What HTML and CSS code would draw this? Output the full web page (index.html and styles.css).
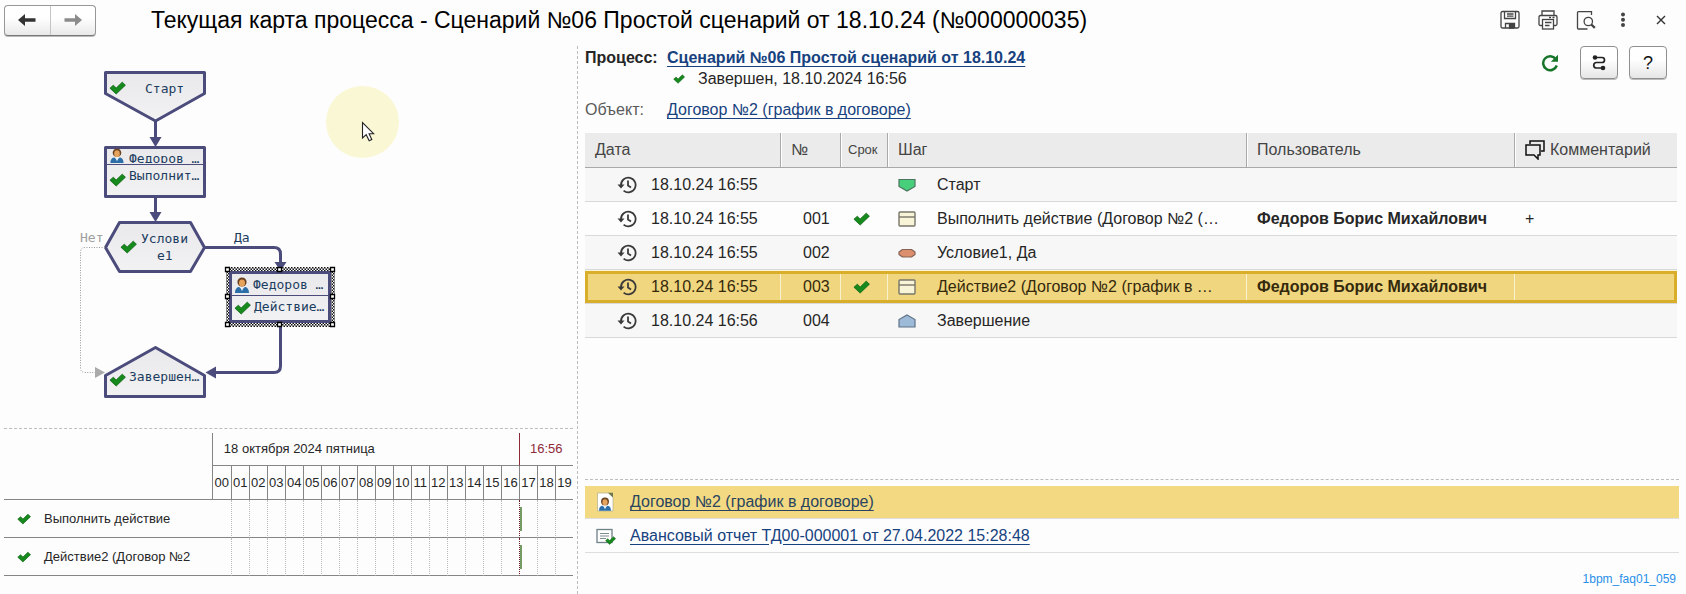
FILE: index.html
```html
<!DOCTYPE html>
<html lang="ru">
<head>
<meta charset="utf-8">
<title>Текущая карта процесса</title>
<link rel="stylesheet" href="styles.css">
</head>
<body>
<svg class="defs" aria-hidden="true">
  <defs>
    <symbol id="check" viewBox="0 0 18 14"><path d="M1 7.2 4.6 4l3 3L14 .8 17.4 4 7.6 13.4Z" fill="#168a1c" stroke="#0c5f14" stroke-width=".8" stroke-linejoin="round"/></symbol>
    <symbol id="person" viewBox="0 0 14 16"><path d="M0 16c0-5 3-6 4-6l3 2 3-2c1 0 4 1 4 6Z" fill="#2c6ea8"/><path d="m5 10 2 4 2-4Z" fill="#e8f2fa"/><circle cx="7" cy="5" r="4.6" fill="#6b4220"/><ellipse cx="7" cy="6" rx="3" ry="3.6" fill="#e5a35c"/></symbol>
    <symbol id="history" viewBox="0 0 20 18"><g fill="none" stroke="#3a3a3a" stroke-width="1.8"><path d="M4 9a7.3 7.3 0 1 1 2.6 5.6M11 4.500v5l3 2"/></g><path d="M.5 8.500h7L4 12.500Z" fill="#3a3a3a"/></symbol>
    <symbol id="action" viewBox="0 0 18 16"><rect x="1" y="1" width="16" height="14" rx="1" fill="#f8f4d8" stroke="#77756a" stroke-width="1.400"/><path d="M1 6h16" stroke="#77756a" stroke-width="1.400"/></symbol>
    <pattern id="hatch" width="3" height="3" patternUnits="userSpaceOnUse"><rect width="3" height="3" fill="#fff"/><path d="M0 0h1.500v1.500H0ZM1.500 1.500H3V3H1.500Z" fill="#111"/></pattern>
    <linearGradient id="fill" x1="0" x2="0" y1="0" y2="1"><stop offset="0" stop-color="#e9e9ec"/><stop offset="1" stop-color="#f2f2f3"/></linearGradient>
    <clipPath id="cut"><rect x="107" y="148" width="96" height="15"/></clipPath>
  </defs>
</svg>

<header class="titlebar">
  <div class="nav">
    <button type="button" aria-label="Назад"><svg width="18" height="12" viewBox="0 0 18 12"><path d="M0 6 7 0v4.300h10.500v3.400H7V12Z" fill="#333"/></svg></button>
    <button type="button" aria-label="Вперед"><svg width="18" height="12" viewBox="0 0 18 12"><path d="M18 6 11 0v4.300H.5v3.400H11V12Z" fill="#8b8b8b"/></svg></button>
  </div>
  <h1>Текущая карта процесса - Сценарий №06 Простой сценарий от 18.10.24 (№000000035)</h1>
  <div class="tools">
    <button type="button" aria-label="Сохранить"><svg width="20" height="20" viewBox="0 0 20 20" fill="none" stroke="#444" stroke-width="1.300"><rect x="1" y="1.500" width="18" height="16.500" rx="1.500"/><path d="M4.500 2v6.500h11V2M7 4h6.500M7 6.200h6.500M5.500 18v-4.500h9V18"/><path d="M9.500 14.500h4V18h-4Z" fill="#444"/></svg></button>
    <button type="button" aria-label="Печать"><svg width="20" height="20" viewBox="0 0 20 20" fill="none" stroke="#444" stroke-width="1.300"><path d="M4 5.500v-4.500h12v4.500M4 15.500H2.500Q1 15.500 1 14V7q0-1.500 1.500-1.500h15Q19 5.500 19 7v7q0 1.500-1.500 1.500H16"/><rect x="4.500" y="9.500" width="11" height="9.500"/><path d="M7 12.500h6.500M7 15.500h4.500M11 7.500h2M14.500 7.500h2"/></svg></button>
    <button type="button" aria-label="Предварительный просмотр"><svg width="20" height="20" viewBox="0 0 20 20" fill="none" stroke="#444" stroke-width="1.300"><path d="M15.500 5V1.700H2.500q-1 0-1 1V18q0 1 1 1h9"/><circle cx="12.300" cy="11.500" r="4.200"/><path d="m15.300 14.500 3.500 3.300" stroke-width="2.400"/></svg></button>
    <button type="button" class="dots" aria-label="Ещё"><svg width="6" height="16" viewBox="0 0 6 16" fill="#444"><circle cx="3" cy="2.500" r="2"/><circle cx="3" cy="7.800" r="2"/><circle cx="3" cy="13" r="2"/></svg></button>
    <button type="button" class="close" aria-label="Закрыть"><svg width="10" height="10" viewBox="0 0 10 10"><path d="m1 1 8 8M9 1 1 9" stroke="#333" stroke-width="1.400"/></svg></button>
  </div>
</header>

<main class="split">
  <section class="left">
    <svg class="map" width="569" height="376" viewBox="4 46 569 376">
      <ellipse cx="362.500" cy="122" rx="36.500" ry="36" fill="#faf7d4"/>
      <path d="M362.500 122.500v15.500l3.700-3.300 3 6 2.600-1.200-2.700-5.800h4.500Z" fill="#fff" stroke="#222" stroke-width="1.100"/>

      <g fill="none" stroke="#4b4b7c" stroke-width="3">
        <path d="M155.500 121v18M155.500 198v16M205 247.500h69q6.500 0 6.500 6.500v10M280.500 326v40q0 6.500-6.500 6.500h-59"/>
        <g fill="url(#fill)" stroke-linejoin="round">
          <path d="M105.500 72.500h99v21l-49 27.500-50-27.500Z"/>
          <path d="M105.500 147.500h99v49h-99Z"/>
          <path d="M119.500 222.500h71l14 25-14 24h-71l-14-24Z"/>
          <path d="m155.500 347.500 49 28v21h-99v-21Z"/>
        </g>
      </g>
      <g fill="#4b4b7c">
        <path d="M149.500 137h12l-6 10ZM149.500 212h12l-6 10ZM274.500 262h12l-6 9ZM216 366.500v12l-10.500-6Z"/>
      </g>
      <path d="M105 247.500H85q-4.500 0-4.500 4.500v116q0 4.500 4.500 4.500h10" fill="none" stroke="#999" stroke-dasharray="1 1.500"/>
      <path d="M95 367v11l10-5.500Z" fill="#aaa"/>

      <path d="M226 267h109v60H226Z" fill="url(#hatch)"/>
      <path d="M230.500 272.500h99v49h-99Z" fill="url(#fill)" stroke="#4b4b7c" stroke-width="3"/>
      <path d="M107 164.500h96M232 295.500h96" stroke="#4b4b7c"/>
      <g fill="#fff" stroke="#000" stroke-width="1.300">
        <path d="M225.500 267.500h4v4h-4ZM277.500 267.500h4v4h-4ZM330.500 267.500h4v4h-4ZM225.500 294.500h4v4h-4ZM330.500 294.500h4v4h-4ZM225.500 322.500h4v4h-4ZM277.500 322.500h4v4h-4ZM330.500 322.500h4v4h-4Z"/>
      </g>

      <use href="#check" x="109" y="81" width="17" height="14"/>
      <use href="#check" x="109" y="173" width="17" height="14"/>
      <use href="#check" x="120" y="240" width="17" height="14"/>
      <use href="#check" x="234" y="301" width="17" height="14"/>
      <use href="#check" x="109" y="373" width="17" height="14"/>
      <use href="#person" x="110" y="148" width="14" height="15"/>
      <use href="#person" x="235" y="277" width="14" height="16"/>

      <g class="map-text">
        <text x="145" y="93">Старт</text>
        <text x="129" y="163" clip-path="url(#cut)">Федоров …</text>
        <text x="129" y="180">Выполнит…</text>
        <text x="141" y="243">Услови</text>
        <text x="157" y="260">е1</text>
        <text x="234" y="242">Да</text>
        <text x="80" y="242" class="muted">Нет</text>
        <text x="253" y="289">Федоров …</text>
        <text x="254" y="311">Действие…</text>
        <text x="129" y="381">Завершен…</text>
      </g>
    </svg>

    <div class="gantt-wrap">
      <table class="gantt">
        <colgroup><col><col class="h0"><col span="19" class="h"></colgroup>
        <thead>
          <tr><td rowspan="2" class="corner"></td><th colspan="17" class="day">18 октября 2024 пятница</th><th colspan="3" class="now">16:56</th></tr>
          <tr class="hours"><th>00</th><th>01</th><th>02</th><th>03</th><th>04</th><th>05</th><th>06</th><th>07</th><th>08</th><th>09</th><th>10</th><th>11</th><th>12</th><th>13</th><th>14</th><th>15</th><th>16</th><th>17</th><th>18</th><th>19</th></tr>
        </thead>
        <tbody>
          <tr><th class="task"><svg width="14" height="12"><use href="#check"/></svg>Выполнить действие</th><td class="first"></td><td></td><td></td><td></td><td></td><td></td><td></td><td></td><td></td><td></td><td></td><td></td><td></td><td></td><td></td><td></td><td></td><td class="mark"><span class="bar"></span></td><td></td><td></td></tr>
          <tr><th class="task"><svg width="14" height="12"><use href="#check"/></svg>Действие2 (Договор №2</th><td class="first"></td><td></td><td></td><td></td><td></td><td></td><td></td><td></td><td></td><td></td><td></td><td></td><td></td><td></td><td></td><td></td><td></td><td class="mark"><span class="bar"></span></td><td></td><td></td></tr>
        </tbody>
      </table>
    </div>
  </section>

  <section class="right">
    <div class="info">
      <dl>
        <dt class="strong">Процесс:</dt>
        <dd><a href="#" class="strong">Сценарий №06 Простой сценарий от 18.10.24</a>
          <span class="state"><svg width="12" height="10"><use href="#check"/></svg>Завершен, 18.10.2024 16:56</span></dd>
        <dt>Объект:</dt>
        <dd><a href="#">Договор №2 (график в договоре)</a></dd>
      </dl>
      <div class="actions">
        <button type="button" class="plain" aria-label="Обновить"><svg width="18" height="18" viewBox="0 0 18 18"><path d="M14.800 5A7 7 0 1 0 15.800 11.500" fill="none" stroke="#17752a" stroke-width="2.500"/><path d="M17 .8v7H9.800Z" fill="#17752a"/></svg></button>
        <button type="button" class="box" aria-label="Маршрут"><svg width="14" height="18" viewBox="0 0 14 18"><path d="M3 3.500h7a2.500 2.500 0 0 1 0 5h-6a2.800 2.800 0 0 0 0 5.500H11" fill="none" stroke="#222" stroke-width="1.700"/><circle cx="3" cy="3.500" r="2.300" fill="#222"/><circle cx="11" cy="14" r="2.300" fill="#222"/></svg></button>
        <button type="button" class="box">?</button>
      </div>
    </div>

    <table class="steps">
      <colgroup><col class="c-date"><col class="c-num"><col class="c-due"><col><col class="c-user"><col class="c-note"></colgroup>
      <thead><tr><th>Дата</th><th>№</th><th class="small">Срок</th><th>Шаг</th><th>Пользователь</th>
        <th><span class="note"><svg width="20" height="20" viewBox="0 0 20 20" fill="none" stroke="#111" stroke-width="1.500"><path d="M5 4V1h14v10h-3"/><path d="M1 5h14v10h-2v4L9 15H1Z"/></svg>Комментарий</span></th></tr></thead>
      <tbody>
        <tr><td><span class="date"><svg width="20" height="18"><use href="#history"/></svg>18.10.24 16:55</span></td><td class="num"></td><td></td><td><span class="step"><svg width="18" height="16" viewBox="0 0 18 16"><path d="M1 2.500h16v7L9 14 1 9.500Z" fill="#48cf7c" stroke="#4c7560" stroke-width="1.200"/></svg>Старт</span></td><td></td><td></td></tr>
        <tr><td><span class="date"><svg width="20" height="18"><use href="#history"/></svg>18.10.24 16:55</span></td><td class="num">001</td><td class="due"><svg width="17" height="14"><use href="#check"/></svg></td><td><span class="step"><svg width="18" height="16"><use href="#action"/></svg>Выполнить действие (Договор №2 (…</span></td><td class="user">Федоров Борис Михайлович</td><td class="plus">+</td></tr>
        <tr><td><span class="date"><svg width="20" height="18"><use href="#history"/></svg>18.10.24 16:55</span></td><td class="num">002</td><td></td><td><span class="step"><svg width="18" height="16" viewBox="0 0 18 16"><path d="M4.500 4.500h9L17 7v2.500L13.500 12h-9L1 9.500V7Z" fill="#dc8f6c" stroke="#866255" stroke-width="1.200" stroke-linejoin="round"/></svg>Условие1, Да</span></td><td></td><td></td></tr>
        <tr class="selected"><td><span class="date"><svg width="20" height="18"><use href="#history"/></svg>18.10.24 16:55</span></td><td class="num">003</td><td class="due"><svg width="17" height="14"><use href="#check"/></svg></td><td><span class="step"><svg width="18" height="16"><use href="#action"/></svg>Действие2 (Договор №2 (график в …</span></td><td class="user">Федоров Борис Михайлович</td><td></td></tr>
        <tr><td><span class="date"><svg width="20" height="18"><use href="#history"/></svg>18.10.24 16:56</span></td><td class="num">004</td><td></td><td><span class="step"><svg width="18" height="16" viewBox="0 0 18 16"><path d="m9 2 8 4.500V14H1V6.500Z" fill="#9dbbd9" stroke="#5f7286" stroke-width="1.200"/></svg>Завершение</span></td><td></td><td></td></tr>
      </tbody>
    </table>

    <ul class="docs">
      <li class="active"><svg width="18" height="20" viewBox="0 0 18 20"><path d="M1.500 1h11L17 5v14H1.500Z" fill="#fff" stroke="#b9b490" stroke-width=".8"/><path d="M12 .8h5v4.700Z" fill="#6b7550"/><use href="#person" x="3" y="5" width="12" height="14"/></svg><a href="#">Договор №2 (график в договоре)</a></li>
      <li><svg width="20" height="20" viewBox="0 0 20 20"><rect x="1" y="3.500" width="15" height="13" fill="#fff" stroke="#6f8088" stroke-width="1.300"/><path d="M4 7.500h9M4 10h9M4 12.500h6" stroke="#7d8b92"/><use href="#check" x="9" y="10" width="11" height="9"/></svg><a href="#">Авансовый отчет ТД00-000001 от 27.04.2022 15:28:48</a></li>
    </ul>
    <p class="tag">1bpm_faq01_059</p>
  </section>
</main>
</body>
</html>
```

FILE: styles.css
```css
* { box-sizing: border-box; }

body {
  margin: 0;
  min-height: 100vh;
  display: flex;
  flex-direction: column;
  background: #fdfdfd;
  color: #262626;
  font: 16px/20px "Liberation Sans", Arial, sans-serif;
}

.defs { position: absolute; width: 0; height: 0; }
svg { display: block; flex: none; }
button { padding: 0; font: inherit; color: #111; background: none; border: 0; }
a { color: #17427f; text-underline-offset: 3px; }
th { font-weight: normal; text-align: left; }
table { border-collapse: separate; border-spacing: 0; table-layout: fixed; width: 100%; }

/* title bar */
.titlebar { display: flex; align-items: center; height: 40px; padding: 0 20px 0 4px; }
.nav {
  display: flex;
  width: 92px;
  height: 31px;
  border: 1px solid #979797;
  border-bottom-color: #777;
  border-radius: 4px;
  background: linear-gradient(#fff 40%, #e9e9e9);
  box-shadow: 0 1px 0 #bbb;
}
.nav button { flex: 1; display: grid; place-items: center; }
.nav button + button { border-left: 1px solid #c4c4c4; }
h1 { flex: 1; margin: 0 0 0 55px; font-size: 23px; line-height: 28px; font-weight: normal; color: #000; white-space: nowrap; }
.tools { display: flex; align-items: center; gap: 18px; }
.dots { margin-left: 6px; }
.close { margin-left: 12px; }

/* panes */
.split { flex: 1; display: grid; grid-template-columns: minmax(0, 577fr) minmax(0, 1109fr); padding-top: 6px; }
.left { display: flex; flex-direction: column; justify-content: space-between; padding: 0 4px 18px; }
.right { display: flex; flex-direction: column; padding: 0 7px 5px; border-left: 1px dashed #bdbdbd; }

.map-text { font: 13px "DejaVu Sans Mono", monospace; fill: #1d3d60; }
.map-text .muted { fill: #a0a0a0; }

/* timeline */
.gantt-wrap { padding-top: 4px; border-top: 1px dashed #bdbdbd; }
.gantt { font-size: 13px; line-height: 16px; }
.gantt th, .gantt td { padding: 0; border-bottom: 1px solid #858585; white-space: nowrap; }
.h0 { width: 19px; }
.h { width: 18px; }
.gantt .day { height: 33px; padding-left: 11px; border-left: 1px solid #858585; }
.gantt .now { padding-left: 10px; border-left: 1px solid #8e2a38; color: #8e2a38; }
.gantt .hours th { height: 34px; border-left: 1px solid #858585; text-align: center; }
.gantt tbody td { height: 38px; border-left: 1px dotted #bbb; }
.gantt tbody .first { border-left: 0; }
.gantt tbody .mark { border-left: 1px dotted #6d1a26; }
.bar { display: block; width: 2px; height: 24px; background: #739b62; }
.task svg { display: inline-block; vertical-align: middle; margin: 0 13px; }

/* process summary */
.info { display: flex; justify-content: space-between; height: 87px; }
dl { display: grid; grid-template-columns: 82px auto; align-content: start; row-gap: 10px; margin: 2px 0 0; }
dt { color: #5a5a5a; }
dd { margin: 0; }
dt.strong { color: #262626; }
.strong, .user { font-weight: bold; }
.state { display: flex; align-items: center; gap: 13px; height: 22px; padding-left: 6px; }
.actions { display: flex; gap: 11px; margin-right: 12px; }
.plain { height: 34px; margin-right: 10px; }
.box {
  display: grid;
  place-items: center;
  width: 38px;
  height: 33px;
  border: 1px solid #8f8f8f;
  border-radius: 4px;
  background: linear-gradient(#fff 40%, #e6e6e6);
  box-shadow: 0 1px 0 #bbb;
  font-size: 18px;
}

/* steps */
.steps { width: calc(100% - 2px); }
.c-date { width: 195px; }
.c-num { width: 60px; }
.c-due { width: 47px; }
.c-user { width: 268px; }
.c-note { width: 163px; }
.steps th {
  height: 35px;
  padding: 0 0 0 10px;
  background: #ebebeb;
  border-bottom: 1px solid #a9a9a9;
  color: #444;
}
.steps th + th { border-left: 1px solid #a9a9a9; box-shadow: inset 1px 0 #fff; }
.steps .small { padding-left: 7px; font-size: 13px; }
.note { display: flex; align-items: center; gap: 5px; }
.steps td { height: 34px; padding: 0 0 0 11px; border-bottom: 1px solid #d9d9d9; background: #f7f7f7; }
.steps tr:nth-child(even) td { background: #fdfdfd; }
.date { display: flex; align-items: center; gap: 14px; padding-left: 21px; }
.steps .num { padding-left: 23px; }
.steps .due { padding-left: 13px; }
.step { display: flex; align-items: center; gap: 21px; white-space: nowrap; }
.steps .plus { padding-left: 11px; }
.steps tr.selected td {
  border-top: 1px solid #fbf4d6;
  background: linear-gradient(#faf1cf, #faf1cf) left / 1px 100% no-repeat #efd67f;
  box-shadow: inset 0 3px #d9ae2b, inset 0 -3px #d9ae2b;
  color: #35290c;
}
.steps tr.selected td:first-child { box-shadow: inset 0 3px #d9ae2b, inset 0 -3px #d9ae2b, inset 3px 0 #d9ae2b; }
.steps tr.selected td:last-child { box-shadow: inset 0 3px #d9ae2b, inset 0 -3px #d9ae2b, inset -3px 0 #d9ae2b; }

/* linked documents */
.docs { list-style: none; margin: auto 0 0; padding: 6px 0 0; border-top: 1px dashed #bdbdbd; }
.docs li { display: flex; align-items: center; gap: 16px; height: 33px; padding-left: 11px; border-bottom: 1px solid #dedede; }
.docs li + li { height: 34px; gap: 14px; }
.docs .active { background: #f3da82; }
.docs .active a { color: #2a4460; }
.tag { margin: 16px 3px 0 0; font-size: 12px; text-align: right; color: #2a8fe8; }
```
